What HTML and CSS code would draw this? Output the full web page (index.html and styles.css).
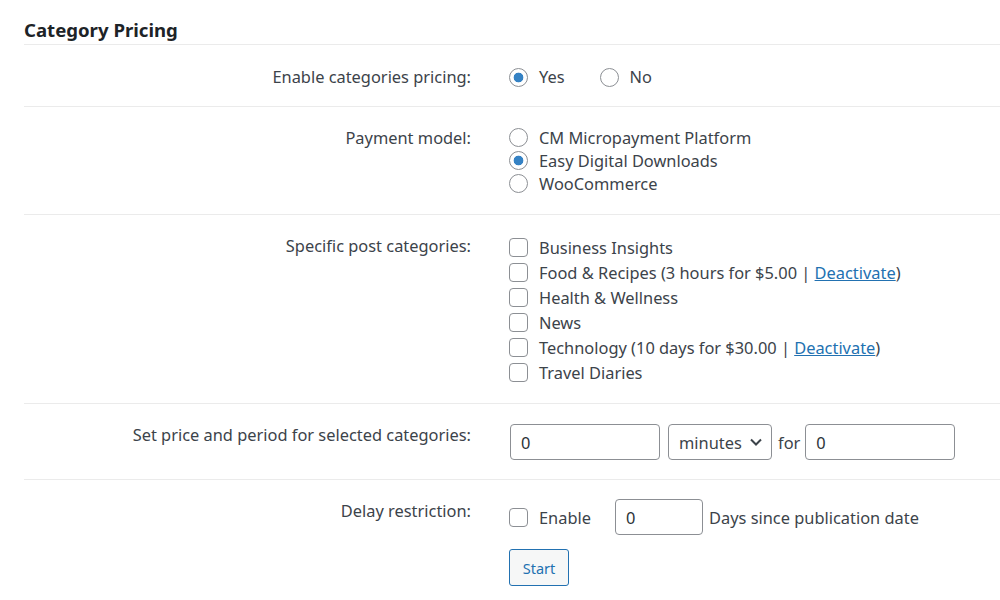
FILE: index.html
```html
<!DOCTYPE html>
<html>
<head>
<meta charset="utf-8">
<link rel="stylesheet" href="styles.css">
</head>
<body>
<div class="page">
  <h2 class="title">Category Pricing</h2>
  <div class="table">
    <div class="row r1">
      <div class="th">Enable categories pricing:</div>
      <div class="td inline">
        <label class="opt"><input type="radio" name="en" checked><span>Yes</span></label>
        <label class="opt"><input type="radio" name="en"><span>No</span></label>
      </div>
    </div>
    <div class="row r2">
      <div class="th">Payment model:</div>
      <div class="td stack">
        <label class="opt"><input type="radio" name="pm"><span>CM Micropayment Platform</span></label>
        <label class="opt"><input type="radio" name="pm" checked><span>Easy Digital Downloads</span></label>
        <label class="opt"><input type="radio" name="pm"><span>WooCommerce</span></label>
      </div>
    </div>
    <div class="row r3">
      <div class="th">Specific post categories:</div>
      <div class="td stack">
        <label class="opt"><input type="checkbox"><span>Business Insights</span></label>
        <label class="opt"><input type="checkbox"><span>Food &amp; Recipes (3 hours for $5.00 | <a href="#">Deactivate</a>)</span></label>
        <label class="opt"><input type="checkbox"><span>Health &amp; Wellness</span></label>
        <label class="opt"><input type="checkbox"><span>News</span></label>
        <label class="opt"><input type="checkbox"><span>Technology (10 days for $30.00 | <a href="#">Deactivate</a>)</span></label>
        <label class="opt"><input type="checkbox"><span>Travel Diaries</span></label>
      </div>
    </div>
    <div class="row r4">
      <div class="th">Set price and period for selected categories:</div>
      <div class="td fields">
        <input class="text price" type="text" value="0">
        <div class="select">
          <span>minutes</span>
          <svg class="chev" width="14" height="10" viewBox="0 0 14 10"><path d="M2 2.5 L7 7.5 L12 2.5" fill="none" stroke="#3c434a" stroke-width="2"/></svg>
        </div>
        <span class="for">for</span>
        <input class="text period" type="text" value="0">
      </div>
    </div>
    <div class="row r5">
      <div class="th">Delay restriction:</div>
      <div class="td">
        <div class="fields delay">
          <label class="opt"><input type="checkbox"><span>Enable</span></label>
          <input class="text days" type="text" value="0">
          <span class="since">Days since publication date</span>
        </div>
        <button class="btn" type="button">Start</button>
      </div>
    </div>
  </div>
</div>
</body>
</html>
```

FILE: styles.css
```css
html, body {
  margin: 0;
  padding: 0;
  background: #ffffff;
}
body {
  font-family: "Noto Sans", "Open Sans", sans-serif;
  font-size: 16.4px;
  color: #3c434a;
}
.page {
  padding-left: 24px;
}
.title {
  margin: 0;
  padding-top: 18px;
  height: 26px;
  font-size: 18.6px;
  line-height: 24px;
  font-weight: 700;
  color: #1d2327;
}
.table {
  border-top: 1px solid #ebebeb;
}
.row {
  display: grid;
  grid-template-columns: 447px 1fr;
  column-gap: 38px;
  border-bottom: 1px solid #ebebeb;
}
.row.r5 {
  border-bottom: none;
}
.th {
  text-align: right;
  line-height: 22px;
  padding-top: 20px;
}
.td {
  padding-top: 20px;
}
.r1 .th { padding-top: 21px; }
.r1 .td { padding-top: 21px; padding-bottom: 18px; line-height: 22px; }
.r2 .th { padding-top: 19px; line-height: 23px; }
.r2 .td { padding-top: 19px; padding-bottom: 19px; line-height: 23px; }
.r3 .td { padding-top: 20px; padding-bottom: 18px; line-height: 25px; }
.r4 .td { padding-top: 20px; padding-bottom: 19px; }
.r5 .td { padding-top: 19px; padding-bottom: 20px; }

.inline {
  display: flex;
  align-items: center;
  gap: 35px;
}
.stack {
  display: flex;
  flex-direction: column;
}
.opt {
  display: flex;
  align-items: center;
  gap: 11px;
}
input[type=radio], input[type=checkbox] {
  appearance: none;
  -webkit-appearance: none;
  margin: 0;
  width: 19px;
  height: 19px;
  border: 1px solid #8c8f94;
  background: #fff;
  flex: none;
  box-sizing: border-box;
}
input[type=radio] {
  border-radius: 50%;
}
input[type=radio]:checked {
  background: radial-gradient(circle, #3582c4 0 4.5px, #fff 5.2px);
}
input[type=checkbox] {
  border-radius: 4px;
}
a {
  color: #2271b1;
  text-decoration: underline;
}
.fields {
  display: flex;
  align-items: center;
}
.text {
  box-sizing: border-box;
  height: 36px;
  border: 1px solid #8c8f94;
  border-radius: 4px;
  padding: 0 10px;
  font: inherit;
  color: #2c3338;
  background: #fff;
  margin: 0;
}
.price { width: 150px; margin-left: 1px; }
.period { width: 150px; }
.select {
  box-sizing: border-box;
  height: 36px;
  width: 104px;
  margin-left: 8px;
  border: 1px solid #8c8f94;
  border-radius: 4px;
  display: flex;
  align-items: center;
  justify-content: space-between;
  padding: 0 8px 0 10px;
}
.for {
  margin: 0 5px 0 6px;
}
.delay {
  height: 36px;
}
.days {
  width: 88px;
  margin-left: 24px;
  margin-right: 6px;
}
.btn {
  margin-top: 14px;
  display: block;
  box-sizing: border-box;
  width: 60px;
  height: 37px;
  border: 1px solid #2271b1;
  border-radius: 3px;
  background: #f6f7f7;
  color: #2271b1;
  font-family: inherit;
  font-size: 14.5px;
  padding: 0;
}
```
